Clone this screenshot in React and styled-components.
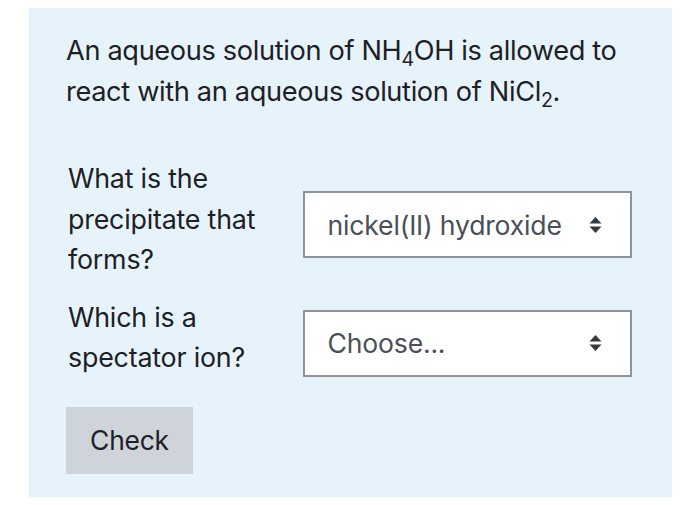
import React from 'react'
import styled, { createGlobalStyle } from 'styled-components'

const Global = createGlobalStyle`
    body {
        margin: 0;
        background: #ffffff;
        font-family: Inter, "Noto Sans", sans-serif;
    }
`

const Panel = styled.div`
    box-sizing: border-box;
    margin: 8px 28px 0 29px;
    width: 643px;
    height: 489px;
    padding: 22px 40px 0 37px;
    background-color: #e7f3fb;
    color: #1d2125;
`

const Prompt = styled.p`
    margin: 0 0 46px;
    font-size: 27.2px;
    line-height: 41px;
    letter-spacing: -0.35px;
    sub {
        font-size: 0.72em;
        vertical-align: -0.3em;
        line-height: 0;
    }
`

const Row = styled.div`
    display: flex;
    align-items: center;
    margin-bottom: 17px;
`

const Label = styled.div`
    width: 235px;
    padding-left: 2px;
    font-size: 26.8px;
    line-height: 40.5px;
    letter-spacing: -0.2px;
`

const SelectBox = styled.div`
    box-sizing: border-box;
    margin-top: 12px;
    width: 330px;
    height: 67px;
    display: flex;
    align-items: center;
    justify-content: space-between;
    padding: 0 28px 0 23px;
    background: #ffffff;
    border: 2px solid #8f959e;
    color: #495057;
    font-size: 26.6px;
    letter-spacing: -0.2px;
`

const Arrows = styled.svg`
    width: 13px;
    height: 18px;
    flex: none;
`

const CheckButton = styled.button`
    margin-top: 12px;
    width: 127px;
    height: 67px;
    border: none;
    background: #ced4da;
    color: #1d2125;
    font-family: inherit;
    font-size: 26.4px;
    letter-spacing: -0.2px;
`

function Select({ value }) {
    return (
        <SelectBox>
            <span>{value}</span>
            <Arrows viewBox="0 0 13 18">
                <path d="M6.5 1 L12.5 7.5 H0.5 Z" fill="#343a40" />
                <path d="M6.5 17 L12.5 10.5 H0.5 Z" fill="#343a40" />
            </Arrows>
        </SelectBox>
    )
}

export default function App() {
    return (
        <>
            <Global />
            <Panel>
                <Prompt>
                    An aqueous solution of NH<sub>4</sub>OH is allowed to react with an aqueous
                    solution of NiCl<sub>2</sub>.
                </Prompt>
                <Row>
                    <Label>What is the<br />precipitate that<br />forms?</Label>
                    <Select value="nickel(II) hydroxide" />
                </Row>
                <Row>
                    <Label>Which is a<br />spectator ion?</Label>
                    <Select value="Choose..." />
                </Row>
                <CheckButton>Check</CheckButton>
            </Panel>
        </>
    )
}
